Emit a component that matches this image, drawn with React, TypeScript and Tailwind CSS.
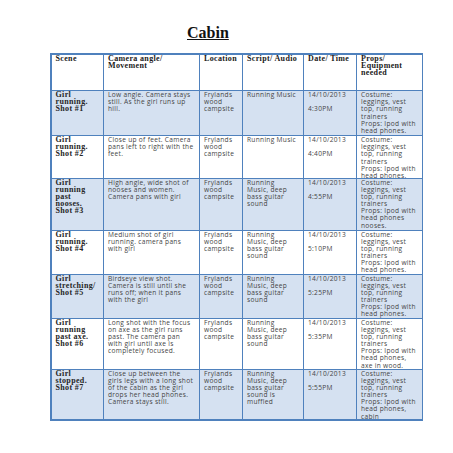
import React from "react";

type Row = {
  scene: string[];
  camera: string[];
  audio: string[];
  time: string;
  props: string[];
};

const base = ["Costume:", "leggings, vest", "top, running", "trainers", "Props: Ipod with"];
const deep = ["Running", "Music, deep", "bass guitar", "sound"];

const rows: Row[] = [
  {
    scene: ["Girl", "running.", "Shot #1"],
    camera: ["Low angle. Camera stays", "still. As the girl runs up", "hill."],
    audio: ["Running Music"],
    time: "4:30PM",
    props: [...base, "head phones."],
  },
  {
    scene: ["Girl", "running.", "Shot #2"],
    camera: ["Close up of feet. Camera", "pans left to right with the", "feet."],
    audio: ["Running Music"],
    time: "4:40PM",
    props: [...base, "head phones."],
  },
  {
    scene: ["Girl", "running", "past", "nooses.", "Shot #3"],
    camera: ["High angle, wide shot of", "nooses and women.", "Camera pans with girl"],
    audio: deep,
    time: "4:55PM",
    props: [...base, "head phones", "nooses."],
  },
  {
    scene: ["Girl", "running.", "Shot #4"],
    camera: ["Medium shot of girl", "running. camera pans", "with girl"],
    audio: deep,
    time: "5:10PM",
    props: [...base, "head phones."],
  },
  {
    scene: ["Girl", "stretching/", "Shot #5"],
    camera: ["Birdseye view shot.", "Camera is still until she", "runs off; when it pans", "with the girl"],
    audio: deep,
    time: "5:25PM",
    props: [...base, "head phones."],
  },
  {
    scene: ["Girl", "running", "past axe.", "Shot #6"],
    camera: [
      "Long shot with the focus",
      "on axe as the girl runs",
      "past. The camera pan",
      "with girl until axe is",
      "completely focused.",
    ],
    audio: deep,
    time: "5:35PM",
    props: [...base, "head phones,", "axe in wood."],
  },
  {
    scene: ["Girl", "stopped.", "Shot #7"],
    camera: [
      "Close up between the",
      "girls legs with a long shot",
      "of the cabin as the girl",
      "drops her head phones.",
      "Camera stays still.",
    ],
    audio: ["Running", "Music, deep", "bass guitar", "sound is", "muffled"],
    time: "5:55PM",
    props: [...base, "head phones,", "cabin"],
  },
];

const serif = { fontFamily: '"Liberation Serif", "DejaVu Serif", serif' };
const sans = { fontFamily: '"Open Sans", "Liberation Sans", sans-serif' };

function Lines({ lines }: { lines: string[] }) {
  return (
    <>
      {lines.map((l, i) => (
        <div key={i} className="whitespace-nowrap h-[7.2px]">
          {l || "\u00a0"}
        </div>
      ))}
    </>
  );
}

function HeadCell({ lines }: { lines: string[] }) {
  return (
    <div
      className="bg-white pl-[4px] text-[8px] leading-[7.2px] tracking-[0.35px] font-bold text-[#1a1a1a] overflow-hidden"
      style={serif}
    >
      <Lines lines={lines} />
    </div>
  );
}

function SceneCell({ lines, shaded }: { lines: string[]; shaded: boolean }) {
  return (
    <div
      className={`${shaded ? "bg-[#d5e1f1]" : "bg-white"} pl-[4px] text-[8px] leading-[7.2px] tracking-[0.35px] font-bold text-[#262626] overflow-hidden`}
      style={serif}
    >
      <Lines lines={lines} />
    </div>
  );
}

function BodyCell({ lines, shaded }: { lines: string[]; shaded: boolean }) {
  return (
    <div
      className={`${shaded ? "bg-[#d5e1f1]" : "bg-white"} pl-[4px] text-[6.6px] leading-[7.2px] tracking-[0.3px] text-[#454545] overflow-hidden`}
      style={sans}
    >
      <Lines lines={lines} />
    </div>
  );
}

export default function App() {
  return (
    <div className="w-[453px] h-[453px] bg-white overflow-hidden">
      <div className="pt-[25px] pl-[187px]">
        <div className="text-[16px] leading-none font-bold underline text-[#111]" style={serif}>
          Cabin
        </div>
      </div>
      <div className="ml-[50px] mt-[12px] w-[373px]">
        <div className="grid grid-cols-[51.5px_95px_42px_60px_52px_64.5px] grid-rows-[35.5px_44px_41.5px_51px_43px_43px_50px_49.5px] gap-[1px] p-[1.5px] bg-[#4f81bd]">
          <HeadCell lines={["Scene"]} />
          <HeadCell lines={["Camera angle/", "Movement"]} />
          <HeadCell lines={["Location"]} />
          <HeadCell lines={["Script/ Audio"]} />
          <HeadCell lines={["Date/ Time"]} />
          <HeadCell lines={["Props/", "Equipment", "needed"]} />
          {rows.map((r, i) => {
            const shaded = i % 2 === 0;
            return (
              <React.Fragment key={i}>
                <SceneCell lines={r.scene} shaded={shaded} />
                <BodyCell lines={r.camera} shaded={shaded} />
                <BodyCell lines={["Frylands", "wood", "campsite"]} shaded={shaded} />
                <BodyCell lines={r.audio} shaded={shaded} />
                <BodyCell lines={["14/10/2013", "", r.time]} shaded={shaded} />
                <BodyCell lines={r.props} shaded={shaded} />
              </React.Fragment>
            );
          })}
        </div>
      </div>
    </div>
  );
}
